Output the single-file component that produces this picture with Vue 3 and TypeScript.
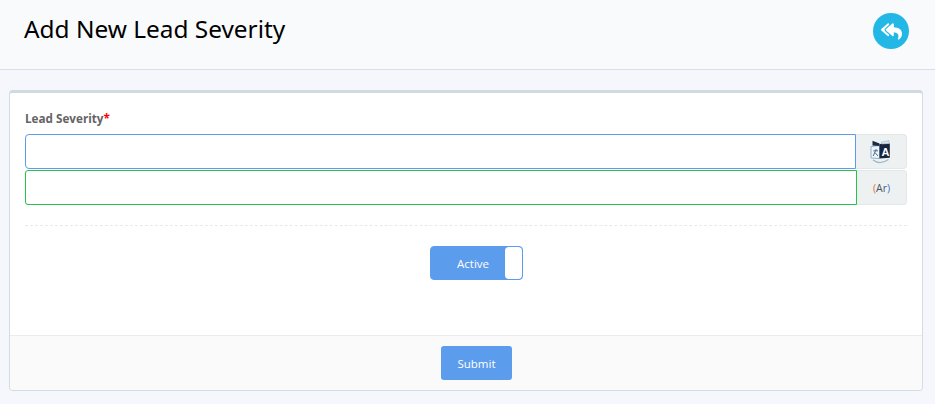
<script setup lang="ts">
const title: string = 'Add New Lead Severity'
</script>

<template>
  <div class="page">
    <header class="head">
      <h1>{{ title }}</h1>
      <button class="back" type="button" aria-label="Back">
        <svg width="21" height="19" viewBox="0 0 576 512">
          <path fill="#fff" d="M136.309 189.836L312.313 37.851C327.72 24.546 352 35.348 352 56.015v82.763c129.182 10.231 224 52.212 224 183.548 0 61.441-39.582 122.309-83.333 154.132-13.653 9.931-33.111-2.533-28.077-18.631 38.512-123.162-3.922-169.482-112.59-182.015v84.175c0 20.701-24.3 31.453-39.687 18.164L136.309 226.164c-11.071-9.561-11.086-26.753 0-36.328zm-128 36.328L184.313 378.15C199.7 391.439 224 380.687 224 359.986v-15.818l-108.606-93.785A55.96 55.96 0 0 1 96 207.998a55.953 55.953 0 0 1 19.393-42.38L224 71.832v-15.8c0-20.667-24.28-31.469-39.687-18.164L8.309 189.836c-11.086 9.575-11.071 26.767 0 36.328z" />
        </svg>
      </button>
    </header>
    <main class="wrap">
      <section class="card">
        <div class="body">
          <label class="label">Lead Severity<span class="req">*</span></label>
          <div class="line first">
            <input class="field blue" type="text" />
            <span class="addon">
              <svg width="22" height="24" viewBox="0 0 22 24">
                <path d="M1 6.5 L9.5 5.5 V18.5 L1 18Z" fill="#eef4f9" stroke="#8fb0cb" stroke-width="1" />
                <path d="M2.5 0.8 L9.5 3.5 V6 L2.5 5.6Z" fill="#1b2a45" />
                <path d="M9.5 4 L19.8 3.4 V17.8 L9.5 18.5Z" fill="#16243f" />
                <path d="M11.5 2.2 L19 0.6 V3.4 L11.5 4Z" fill="#dbe6ee" stroke="#9db5c8" stroke-width="0.6" />
                <path d="M3 20 C7.5 23.4 13 23.4 18.5 19.5" fill="none" stroke="#a3b7c7" stroke-width="1.1" />
                <path d="M3.2 16 L6.3 9 M3.4 10.8 H8 M5 12.6 L8 16" fill="none" stroke="#4f6b86" stroke-width="1" />
                <text x="11.4" y="15.5" class="icon-a">A</text>
              </svg>
            </span>
          </div>
          <div class="line">
            <input class="field green" type="text" dir="rtl" />
            <span class="addon ar"><i class="p1">(</i>Ar<i class="p2">)</i></span>
          </div>
          <div class="divider"></div>
          <div class="toggle-row">
            <div class="toggle">
              <span class="toggle-label">Active</span>
              <span class="knob"></span>
            </div>
          </div>
        </div>
        <footer class="foot">
          <button class="submit" type="button">Submit</button>
        </footer>
      </section>
    </main>
  </div>
</template>

<style>
html, body { margin: 0; background: #f5f7fc; }
</style>

<style scoped>
.page {
  width: 935px;
  height: 404px;
  overflow: hidden;
  background: #f5f7fc;
  font-family: "Open Sans", sans-serif;
  box-sizing: border-box;
}
.head {
  height: 70px;
  box-sizing: border-box;
  background: #f9fafc;
  border-bottom: 1px solid #d8dfe6;
  display: flex;
  align-items: flex-start;
  justify-content: space-between;
  padding: 0 26px 0 24px;
}
h1 {
  margin: 12px 0 0;
  font-family: "Noto Sans", sans-serif;
  font-size: 24.4px;
  line-height: 33px;
  font-weight: 400;
  color: #000;
}
.back {
  width: 36px;
  height: 36px;
  margin-top: 13px;
  padding: 0;
  border: 0;
  border-radius: 50%;
  background: #23b7e5;
  display: flex;
  align-items: center;
  justify-content: center;
}
.wrap { padding: 20px 12px 0 9px; }
.card {
  height: 301px;
  box-sizing: border-box;
  background: #fff;
  border: 1px solid #d3dde4;
  border-top: 3px solid #d0dbe1;
  border-radius: 4px;
  display: flex;
  flex-direction: column;
}
.body { flex: 1; padding: 17px 15px 0 15px; }
.label {
  display: block;
  height: 24px;
  font-size: 11.7px;
  line-height: 16px;
  font-weight: 700;
  color: #646464;
}
.req { color: #f00; }
.line { display: flex; height: 35px; }
.line.first { height: 36px; }
.field {
  flex: 1;
  min-width: 0;
  height: 35px;
  box-sizing: border-box;
  background: #fff;
  border-radius: 4px 0 0 4px;
  outline: none;
  padding: 0 8px;
}
.blue { border: 1px solid #5c9ced; }
.green { border: 1px solid #27c24c; border-radius: 3px 0 0 3px; }
.addon {
  width: 51px;
  height: 35px;
  box-sizing: border-box;
  background: #edf1f2;
  border: 1px solid #e2e7e9;
  border-left: 0;
  border-radius: 0 4px 4px 0;
  display: flex;
  align-items: center;
  justify-content: center;
  font-size: 10.5px;
  color: #4a565e;
}
.addon.ar { width: 50px; }
.p1 { font-style: normal; color: #d9773f; }
.p2 { font-style: normal; color: #4272c4; }
.icon-a {
  font-family: "Liberation Sans", sans-serif;
  font-size: 11px;
  font-weight: 700;
  fill: #fff;
}
.divider {
  margin-top: 20px;
  border-top: 1px dashed #e6eaee;
}
.toggle-row {
  margin-top: 20px;
  padding-left: 21px;
  display: flex;
  justify-content: center;
}
.toggle {
  width: 93px;
  height: 34px;
  box-sizing: border-box;
  background: #5c9ced;
  border: 1px solid #5c9ced;
  border-radius: 4px;
  display: flex;
  align-items: center;
  color: #fff;
  font-size: 11.5px;
}
.toggle-label { flex: 1; text-align: center; padding-left: 10px; }
.knob {
  width: 17px;
  height: 32px;
  background: #fff;
  border-radius: 4px;
}
.foot {
  height: 55px;
  box-sizing: border-box;
  background: #fafafa;
  border-top: 1px solid #ececec;
  border-radius: 0 0 3px 3px;
  padding-left: 21px;
  display: flex;
  align-items: center;
  justify-content: center;
}
.submit {
  width: 71px;
  height: 34px;
  padding: 0;
  border: 0;
  border-radius: 3px;
  background: #5c9ced;
  color: #fff;
  font-family: "Open Sans", sans-serif;
  font-size: 11.5px;
}
</style>
